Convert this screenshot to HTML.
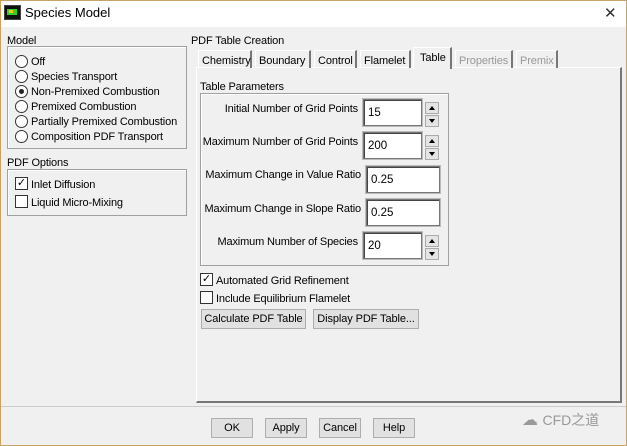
<html><head><style>
body{margin:0;width:627px;height:446px;overflow:hidden;background:#f0f0f0;font-family:"Liberation Sans",Tahoma,sans-serif;font-size:11px;color:#000;position:relative}
.a{position:absolute;white-space:nowrap}
.box{position:absolute;border:1px solid #a0a0a0;box-shadow:1px 1px 0 #fff inset}
.rad{position:absolute;width:11px;height:11px;border:1px solid #333;border-radius:50%;background:#fff}
.chk{position:absolute;width:11px;height:11px;border:1px solid #333;background:#fff}
.inp{position:absolute;background:#fff;border:1px solid #777;box-shadow:inset 1px 1px 0 #444;outline:1px solid #bbb;font-size:11.5px;padding:7px 0 0 4px;box-sizing:border-box}
.sp{position:absolute;width:14px;height:12px;background:#e4e4e4;border:1px solid #aaa;box-sizing:border-box}
.tab{position:absolute;top:50px;height:18px;border-right:2px solid #777;border-left:1px solid #fff;border-top:1px solid #fff;padding:4px 0 0 3px;box-sizing:border-box;font-size:11px;letter-spacing:-0.1px;white-space:nowrap}
.btn{position:absolute;height:20px;background:#e1e1e1;border:1px solid #adadad;box-sizing:border-box;text-align:center;line-height:19px;font-size:11px;letter-spacing:-0.1px;white-space:nowrap}
.lbl{position:absolute;font-size:11px;letter-spacing:-0.15px;white-space:nowrap;margin-top:2px}
</style></head><body>
<div class="a" style="left:0;top:0;width:627px;height:27px;background:#fff"></div>
<div class="a" style="left:0;top:0;width:625px;height:444px;border:1px solid #c9a266"></div>
<div class="a" style="left:4px;top:5px;width:15px;height:13px;background:#111;border:1px solid #444"><div style="position:absolute;left:2px;top:3px;width:10px;height:6px;background:#3c3"></div><div style="position:absolute;left:4px;top:4px;width:4px;height:3px;background:#fc0"></div></div>
<div class="a" style="left:25px;top:5px;font-size:13px">Species Model</div>
<div class="a" style="left:604px;top:4px;font-size:15px;color:#333">✕</div>

<div class="lbl" style="left:7px;top:33px">Model</div>
<div class="box" style="left:7px;top:46px;width:178px;height:101px"></div>
<div class="rad" style="left:15px;top:55px"></div><div class="lbl" style="left:31px;top:54px">Off</div>
<div class="rad" style="left:15px;top:70px"></div><div class="lbl" style="left:31px;top:69px">Species Transport</div>
<div class="rad" style="left:15px;top:85px"><div style="margin:3px;width:5px;height:5px;border-radius:50%;background:#222"></div></div><div class="lbl" style="left:31px;top:84px">Non-Premixed Combustion</div>
<div class="rad" style="left:15px;top:100px"></div><div class="lbl" style="left:31px;top:99px">Premixed Combustion</div>
<div class="rad" style="left:15px;top:115px"></div><div class="lbl" style="left:31px;top:114px">Partially Premixed Combustion</div>
<div class="rad" style="left:15px;top:130px"></div><div class="lbl" style="left:31px;top:129px">Composition PDF Transport</div>

<div class="lbl" style="left:7px;top:155px">PDF Options</div>
<div class="box" style="left:7px;top:169px;width:178px;height:45px"></div>
<div class="chk" style="left:15px;top:177px;font-size:11px;line-height:11px;text-align:center">✓</div><div class="lbl" style="left:31px;top:177px">Inlet Diffusion</div>
<div class="chk" style="left:15px;top:195px"></div><div class="lbl" style="left:31px;top:195px">Liquid Micro-Mixing</div>

<div class="lbl" style="left:191px;top:33px">PDF Table Creation</div>
<div class="a" style="left:196px;top:67px;width:423px;height:333px;border-top:1px solid #fff;border-left:1px solid #fff;border-right:2px solid #777;border-bottom:2px solid #777"></div>
<div class="tab" style="left:198px;width:54px">Chemistry</div>
<div class="tab" style="left:255px;width:56px">Boundary</div>
<div class="tab" style="left:314px;width:43px">Control</div>
<div class="tab" style="left:360px;width:51px">Flamelet</div>
<div class="tab" style="left:413px;top:47px;height:22px;width:39px;background:#f0f0f0;padding-left:6px">Table</div>
<div class="tab" style="left:455px;width:58px;color:#999">Properties</div>
<div class="tab" style="left:516px;width:42px;color:#999">Premix</div>

<div class="lbl" style="left:200px;top:79px">Table Parameters</div>
<div class="box" style="left:200px;top:93px;width:247px;height:171px"></div>
<div class="lbl" style="left:180px;top:101px;width:178px;text-align:right">Initial Number of Grid Points</div>
<div class="inp" style="left:363px;top:99px;width:59px;height:27px">15</div>
<div class="sp" style="left:425px;top:102px"><svg width="12" height="10"><path d="M3 7h6L6 3z"/></svg></div><div class="sp" style="left:425px;top:115px"><svg width="12" height="10"><path d="M3 3h6L6 7z"/></svg></div>
<div class="lbl" style="left:180px;top:134px;width:178px;text-align:right">Maximum Number of Grid Points</div>
<div class="inp" style="left:363px;top:132px;width:59px;height:27px">200</div>
<div class="sp" style="left:425px;top:135px"><svg width="12" height="10"><path d="M3 7h6L6 3z"/></svg></div><div class="sp" style="left:425px;top:148px"><svg width="12" height="10"><path d="M3 3h6L6 7z"/></svg></div>
<div class="lbl" style="left:180px;top:167px;width:181px;text-align:right">Maximum Change in Value Ratio</div>
<div class="inp" style="left:366px;top:166px;width:74px;height:27px">0.25</div>
<div class="lbl" style="left:180px;top:201px;width:181px;text-align:right">Maximum Change in Slope Ratio</div>
<div class="inp" style="left:366px;top:199px;width:74px;height:27px">0.25</div>
<div class="lbl" style="left:180px;top:234px;width:178px;text-align:right">Maximum Number of Species</div>
<div class="inp" style="left:363px;top:232px;width:59px;height:27px">20</div>
<div class="sp" style="left:425px;top:235px"><svg width="12" height="10"><path d="M3 7h6L6 3z"/></svg></div><div class="sp" style="left:425px;top:248px"><svg width="12" height="10"><path d="M3 3h6L6 7z"/></svg></div>

<div class="chk" style="left:200px;top:273px;font-size:11px;line-height:11px;text-align:center">✓</div><div class="lbl" style="left:216px;top:273px">Automated Grid Refinement</div>
<div class="chk" style="left:200px;top:291px"></div><div class="lbl" style="left:216px;top:291px">Include Equilibrium Flamelet</div>
<div class="btn" style="left:201px;top:309px;width:105px">Calculate PDF Table</div>
<div class="btn" style="left:313px;top:309px;width:106px">Display PDF Table...</div>

<div class="a" style="left:1px;top:406px;width:625px;height:1px;background:#ccc"></div>
<div class="btn" style="left:211px;top:418px;width:42px">OK</div>
<div class="btn" style="left:265px;top:418px;width:42px">Apply</div>
<div class="btn" style="left:319px;top:418px;width:42px">Cancel</div>
<div class="btn" style="left:373px;top:418px;width:42px">Help</div>
<div class="a" style="left:522px;top:410px;font-size:16px;color:#999">☁ <span style="font-family:'Liberation Sans','Noto Sans CJK SC',sans-serif;font-size:14px">CFD之道</span></div>
</body></html>
